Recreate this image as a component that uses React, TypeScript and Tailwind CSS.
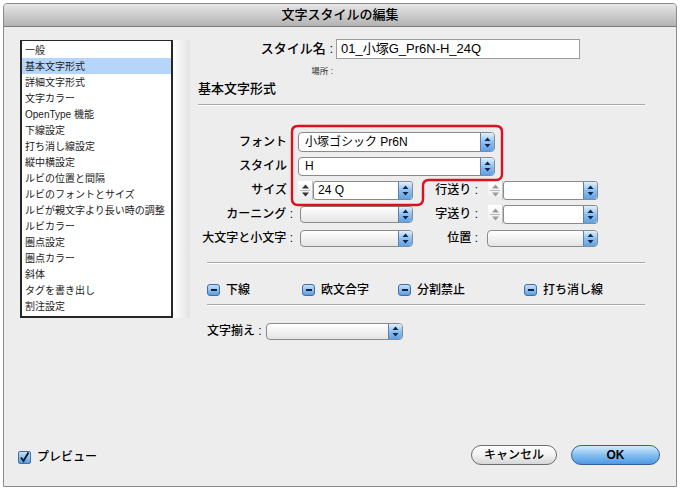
import React from 'react'

const FONT = { fontFamily: '"Liberation Sans", "Noto Sans CJK JP", sans-serif' }

const ITEMS = [
  '一般',
  '基本文字形式',
  '詳細文字形式',
  '文字カラー',
  'OpenType 機能',
  '下線設定',
  '打ち消し線設定',
  '縦中横設定',
  'ルビの位置と間隔',
  'ルビのフォントとサイズ',
  'ルビが親文字より長い時の調整',
  'ルビカラー',
  '圏点設定',
  '圏点カラー',
  '斜体',
  'タグを書き出し',
  '割注設定',
]

function Arrows() {
  return (
    <svg width="7" height="11" viewBox="0 0 7 11">
      <path d="M3.5 0.5 L6.5 4 H0.5 Z" fill="#13264a" />
      <path d="M3.5 10.5 L6.5 7 H0.5 Z" fill="#13264a" />
    </svg>
  )
}

function BlueCap({ h }: { h: number }) {
  return (
    <div
      className="flex w-[14px] shrink-0 items-center justify-center rounded-r-[3px] border-l border-[#5d7fae] bg-gradient-to-b from-[#e3f0fc] via-[#8cc0f0] to-[#5ea3e6]"
      style={{ height: h }}
    >
      <Arrows />
    </div>
  )
}

function Popup({ w, h, text, white }: { w: number; h: number; text?: string; white?: boolean }) {
  return (
    <div
      className={
        'flex items-stretch rounded-[4px] border border-[#8a8a8a] ' +
        (white ? 'bg-white' : 'bg-gradient-to-b from-white to-[#e4e4e4]')
      }
      style={{ width: w, height: h }}
    >
      <div className="flex flex-1 items-center pl-[6px] text-[12px] text-black">{text}</div>
      <BlueCap h={h - 2} />
    </div>
  )
}

function Spinner({ dark }: { dark?: boolean }) {
  const c = dark ? '#333' : '#9a9a9a'
  return (
    <div className="flex h-full w-[15px] shrink-0 flex-col items-center justify-center gap-[1px] border-r border-[#c4c4c4] bg-gradient-to-b from-white to-[#ececec]">
      <svg width="9" height="5" viewBox="0 0 9 5">
        <path d="M4.5 0.5 L8 4.5 H1 Z" fill={c} />
      </svg>
      <div className="h-px w-[10px] bg-[#b8b8b8]" />
      <svg width="9" height="5" viewBox="0 0 9 5">
        <path d="M4.5 4.5 L8 0.5 H1 Z" fill={c} />
      </svg>
    </div>
  )
}

function SpinCombo({ w, text, dark }: { w: number; text?: string; dark?: boolean }) {
  return (
    <div className="flex h-[19px] items-stretch" style={{ width: w }}>
      <Spinner dark={dark} />
      <div className="flex flex-1 items-stretch rounded-[3px] border border-[#8a8a8a] bg-white">
        <div className="flex flex-1 items-center pl-[4px] text-[12px] text-black">{text}</div>
        <BlueCap h={17} />
      </div>
    </div>
  )
}

function Mixed({ label }: { label: string }) {
  return (
    <div className="flex items-center gap-[6px]">
      <div className="flex h-[12px] w-[13px] items-center justify-center rounded-[3px] border border-[#3f6ea8] bg-gradient-to-b from-[#c7e0f8] to-[#5d9ee0]">
        <div className="h-[2px] w-[6px] bg-[#10223f]" />
      </div>
      <span className="text-[12px] font-medium text-black">{label}</span>
    </div>
  )
}

function Label({ w, children }: { w: number; children: React.ReactNode }) {
  return (
    <div className="shrink-0 text-right text-[12px] font-medium text-black" style={{ width: w }}>
      {children}
    </div>
  )
}

function Etch() {
  return <div className="h-[2px] border-t border-b border-t-[#a9a9a9] border-b-white" />
}

export default function App() {
  return (
    <div className="relative h-[490px] w-[680px] bg-white p-[3px]" style={FONT}>
      <div className="flex h-[484px] flex-col overflow-hidden rounded-t-[4px] border border-[#8b8b8b] bg-[#ededed]">
        <div className="flex h-[23px] shrink-0 items-center justify-center border-b border-[#7c7c7c] bg-gradient-to-b from-[#e6e6e6] to-[#b3b3b3] text-[13px] font-medium text-black">
          文字スタイルの編集
        </div>

        <div className="flex flex-1">
          {/* category list */}
          <div className="ml-[16px] mt-[13px] flex h-[278px]">
            <div className="w-[153px] border-2 border-t border-[#262626] bg-white pt-[1px]">
              {ITEMS.map((it, i) => (
                <div
                  key={it}
                  className={
                    'flex h-[16px] items-center pl-[3px] text-[10px] text-[#222] ' +
                    (i === 1 ? 'bg-[#b6d5fb]' : '')
                  }
                >
                  {it}
                </div>
              ))}
            </div>
            <div className="w-[17px] bg-gradient-to-r from-white to-[#e2e2e2]" />
          </div>

          {/* settings */}
          <div className="ml-[8px] w-[447px]">
            <div className="mt-[12px] flex h-[20px] items-center">
              <div className="w-[135px] text-right text-[13px] font-medium text-black">スタイル名 :</div>
              <div className="ml-[3px] flex h-[20px] w-[244px] items-center border border-[#9c9c9c] bg-white pl-[4px] text-[13px] text-black">
                01_小塚G_Pr6N-H_24Q
              </div>
            </div>
            <div className="mt-[6px] h-[12px] w-[135px] text-right text-[8.5px] leading-[12px] text-[#333]">
              場所 :
            </div>
            <div className="mt-[3px] h-[18px] text-[13px] font-medium leading-[18px] text-black">基本文字形式</div>
            <div className="mt-[6px]">
              <Etch />
            </div>

            <div className="mt-[26px] flex flex-col gap-[4px]">
              <div className="flex h-[20px] items-center">
                <Label w={89}>フォント</Label>
                <div className="ml-[11px]">
                  <Popup w={197} h={20} text="小塚ゴシック Pr6N" white />
                </div>
              </div>
              <div className="flex h-[20px] items-center">
                <Label w={89}>スタイル</Label>
                <div className="ml-[11px]">
                  <Popup w={197} h={19} text="H" white />
                </div>
              </div>
              <div className="flex h-[20px] items-center">
                <Label w={89}>サイズ</Label>
                <div className="ml-[11px]">
                  <SpinCombo w={115} text="24 Q" dark />
                </div>
                <Label w={65}>行送り :</Label>
                <div className="ml-[10px]">
                  <SpinCombo w={110} />
                </div>
              </div>
              <div className="flex h-[20px] items-center">
                <Label w={95}>カーニング :</Label>
                <div className="ml-[7px]">
                  <Popup w={113} h={17} />
                </div>
                <Label w={65}>字送り :</Label>
                <div className="ml-[10px]">
                  <SpinCombo w={110} />
                </div>
              </div>
              <div className="flex h-[20px] items-center">
                <Label w={95}>大文字と小文字 :</Label>
                <div className="ml-[7px]">
                  <Popup w={113} h={17} />
                </div>
                <Label w={65}>位置 :</Label>
                <div className="ml-[9px]">
                  <Popup w={111} h={17} />
                </div>
              </div>
            </div>

            <div className="ml-[9px] mt-[14px]">
              <Etch />
            </div>
            <div className="ml-[9px] mt-[19px] flex h-[14px] items-center">
              <div className="w-[95px]">
                <Mixed label="下線" />
              </div>
              <div className="w-[96px]">
                <Mixed label="欧文合字" />
              </div>
              <div className="w-[126px]">
                <Mixed label="分割禁止" />
              </div>
              <Mixed label="打ち消し線" />
            </div>
            <div className="ml-[9px] mt-[7px]">
              <Etch />
            </div>
            <div className="ml-[9px] mt-[17px] flex h-[16px] items-center">
              <span className="w-[59px] text-[12px] font-medium text-black">文字揃え :</span>
              <Popup w={137} h={17} />
            </div>
          </div>
        </div>

        {/* footer */}
        <div className="flex h-[41px] shrink-0 items-start pb-[20px]">
          <div className="ml-[14px] mt-[3px] flex items-center gap-[6px]">
            <div className="flex h-[13px] w-[13px] items-center justify-center rounded-[2px] border border-[#3f6ea8] bg-gradient-to-b from-[#c7e0f8] to-[#5d9ee0]">
              <svg width="11" height="11" viewBox="0 0 11 11">
                <path d="M2 5.5 L4.5 9 L9.5 0.5" fill="none" stroke="#0d1f3c" strokeWidth="2" />
              </svg>
            </div>
            <span className="text-[12px] font-medium text-black">プレビュー</span>
          </div>
          <div className="ml-auto mr-[16px] flex items-center gap-[14px]">
            <div className="flex h-[20px] w-[86px] items-center justify-center rounded-full border border-[#6d6d6d] bg-gradient-to-b from-white via-[#f2f2f2] to-[#d6d6d6] text-[12px] font-medium text-black">
              キャンセル
            </div>
            <div className="flex h-[20px] w-[89px] items-center justify-center rounded-full border border-[#36629b] bg-gradient-to-b from-[#d4eafb] via-[#86bff0] to-[#4c9ae4] text-[12px] font-bold text-black">
              OK
            </div>
          </div>
        </div>
      </div>

      {/* red highlight annotation */}
      <svg className="pointer-events-none absolute left-0 top-0" width="680" height="490">
        <path
          d="M298 126 H496 Q502 126 502 132 V174 Q502 180 496 180 H429 Q423 180 423 186 V199 Q423 205 417 205 H298 Q292 205 292 199 V132 Q292 126 298 126 Z"
          fill="none"
          stroke="#d9121f"
          strokeWidth="2.4"
        />
      </svg>
    </div>
  )
}
